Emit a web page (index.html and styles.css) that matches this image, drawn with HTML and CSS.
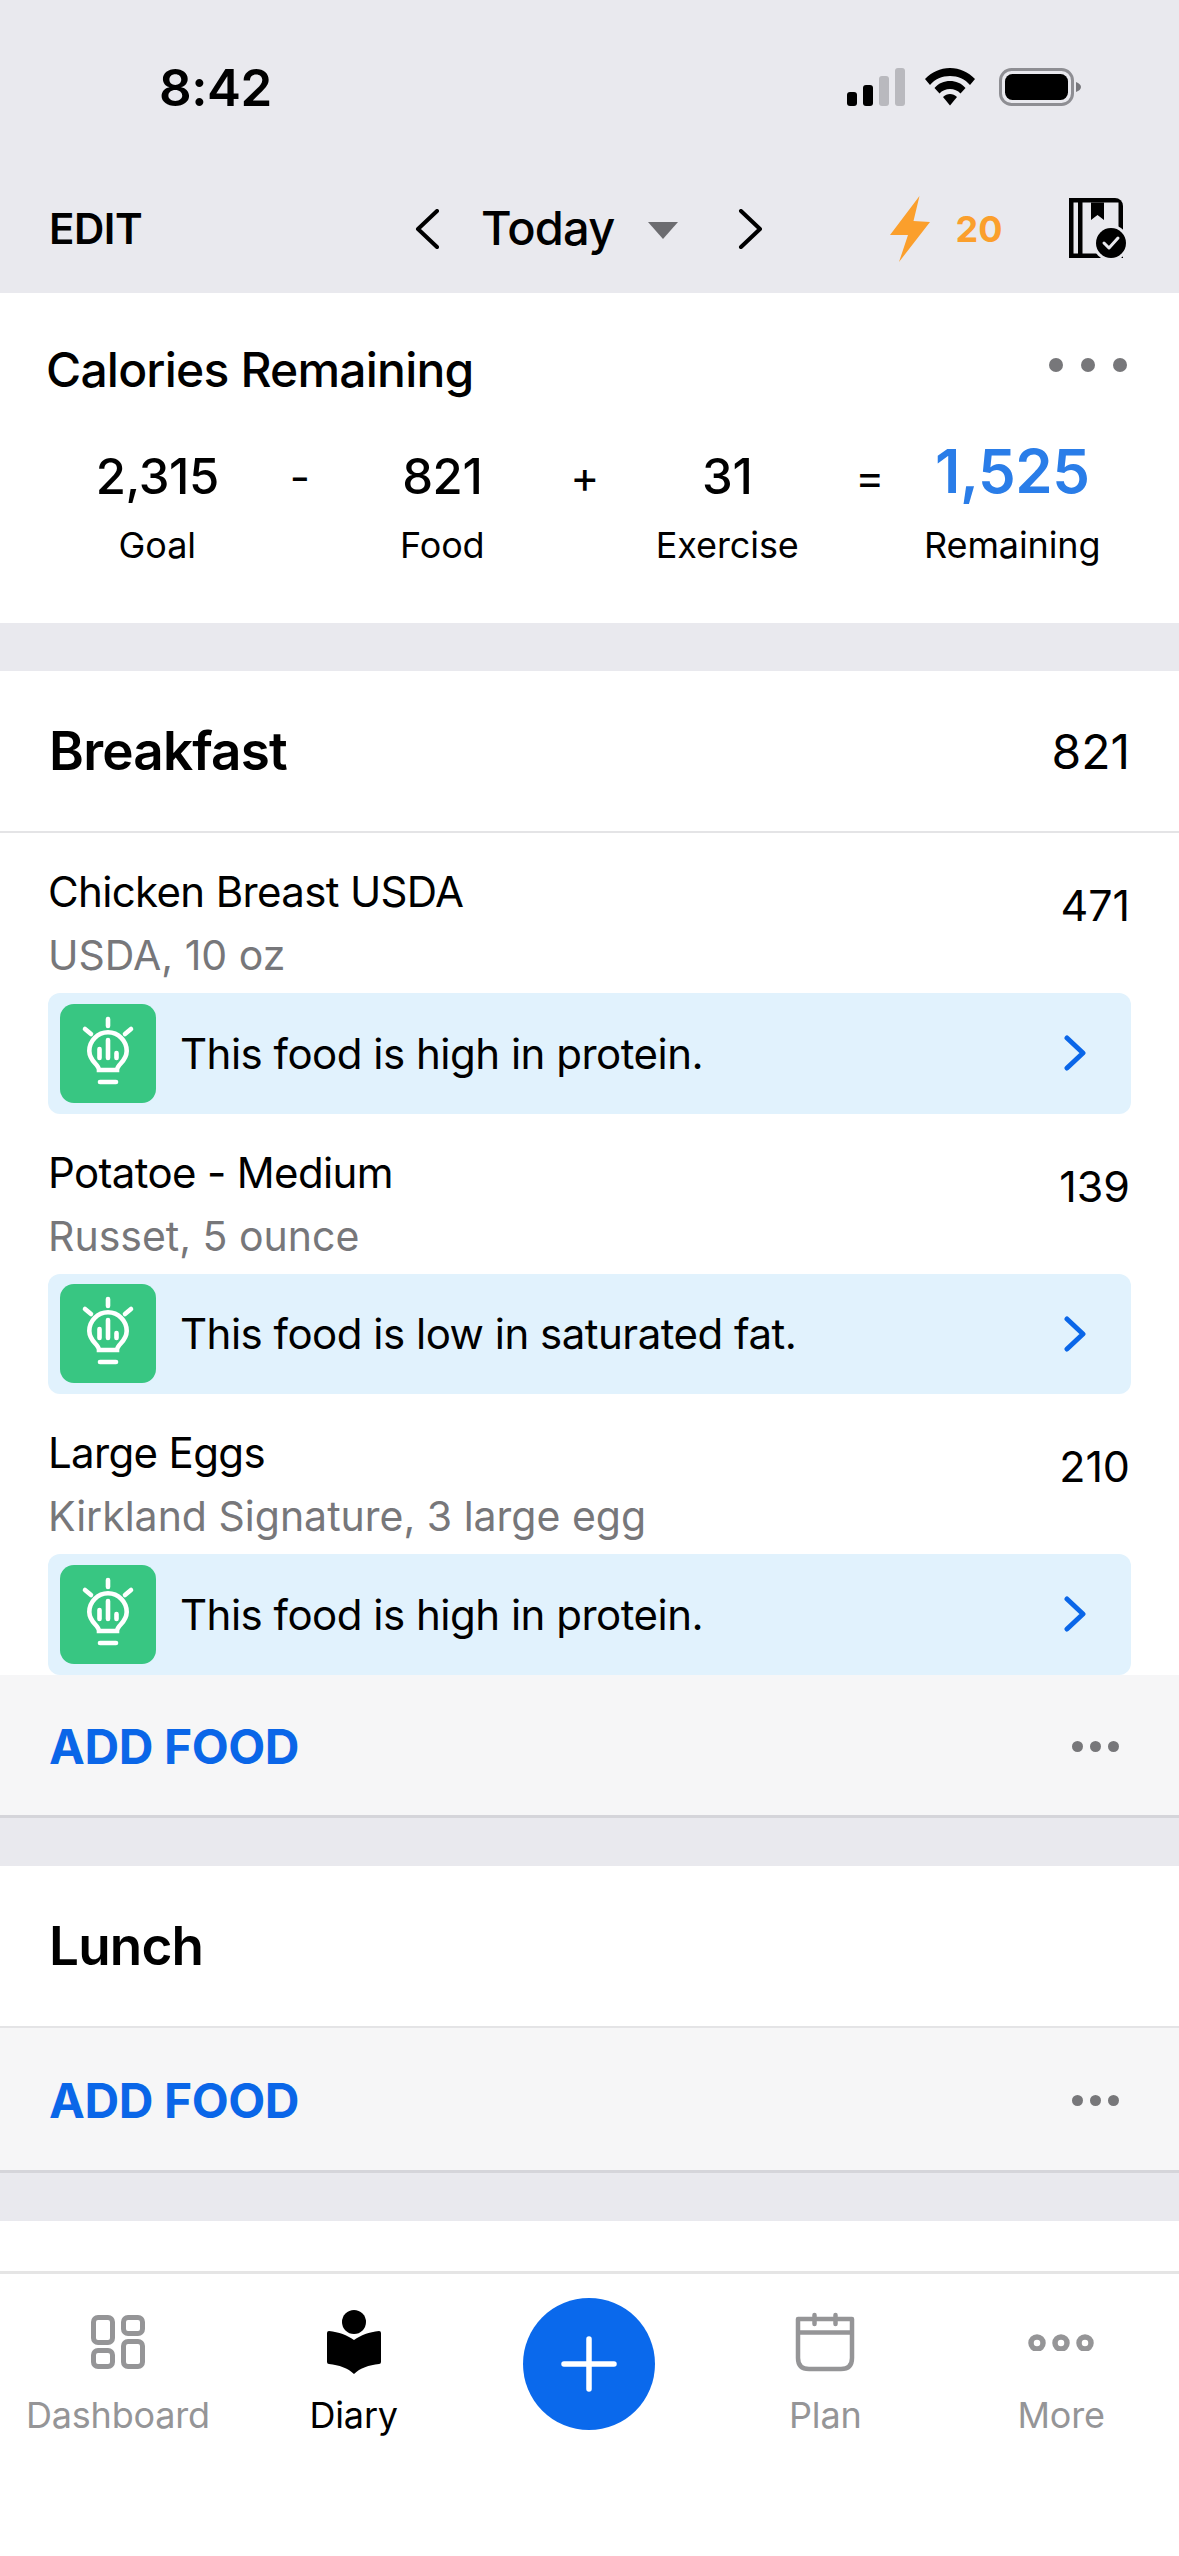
FILE: index.html
```html
<!DOCTYPE html>
<html lang="en">

<head>
  <meta charset="UTF-8">
  <meta name="viewport" content="width=device-width, initial-scale=1.0">
  <title>Diary</title>
  <link rel="stylesheet" href="styles.css">
</head>

<body>
  <svg class="defs" width="0" height="0">
    <symbol id="bulb" viewBox="0 0 96 99">
      <g fill="none" stroke="#fff" stroke-width="4.600" stroke-linecap="round">
        <path d="M39 66C39 60 29.500 58 29.300 47A18.700 18.700 0 1 1 66.700 47C66.500 58 57 60 57 66Z" />
        <path d="M48 15V22M25 25L31 30M71 25L65 30" />
        <path d="M39.500 45V54M48 36V54M56.500 49V54" />
        <path d="M40 78H56" />
      </g>
    </symbol>
    <symbol id="chev" viewBox="0 0 24 36">
      <path d="M4 3L20 18L4 33" fill="none" stroke="#0a66e8" stroke-width="5" stroke-linecap="round" stroke-linejoin="round" />
    </symbol>
  </svg>

  <!-- top bar -->
  <header class="top">
    <div class="status">
      <span class="clock">8:42</span>
      <svg class="signal" width="58" height="38" viewBox="0 0 58 38">
        <rect x="0" y="24" width="10" height="14" rx="3" fill="#000" />
        <rect x="16" y="17" width="10" height="21" rx="3" fill="#000" />
        <rect x="32" y="8" width="10" height="30" rx="3" fill="#b9b9be" />
        <rect x="48" y="0" width="10" height="38" rx="3" fill="#b9b9be" />
      </svg>
      <svg class="wifi" width="50" height="38" viewBox="0 0 50 38">
        <path d="M25 0C15 0 7 4 0 11L5 17C10 11 17 8 25 8C33 8 40 11 45 17L50 11C43 4 35 0 25 0Z" />
        <path d="M25 13C19 13 14 15 9.500 20L14.500 25.500C17 22.500 21 21 25 21C29 21 33 22.500 35.500 25.500L40.500 20C36 15 31 13 25 13Z" />
        <path d="M25 26C22.500 26 20 27 18 29L25 37.500L32 29C30 27 27.500 26 25 26Z" />
      </svg>
      <svg class="battery" width="83" height="38" viewBox="0 0 83 38">
        <rect x="1.500" y="1.500" width="72" height="35" rx="11" fill="none" stroke="#8e8e93" stroke-width="3" />
        <rect x="6" y="6" width="63" height="26" rx="7.500" fill="#000" />
        <path d="M77 14C80 15 82 17 82 19C82 21 80 23 77 24Z" fill="#77777c" />
      </svg>
    </div>
    <nav class="nav">
      <span class="edit">EDIT</span>
      <div class="date-pick">
        <svg width="25" height="40" viewBox="0 0 25 40">
          <path d="M22 2L3 20L22 38" fill="none" stroke="#000" stroke-width="4" stroke-linecap="round" stroke-linejoin="round" />
        </svg>
        <span class="today">Today</span>
        <span class="caret"></span>
        <svg width="25" height="40" viewBox="0 0 25 40">
          <path d="M3 2L22 20L3 38" fill="none" stroke="#000" stroke-width="4" stroke-linecap="round" stroke-linejoin="round" />
        </svg>
      </div>
      <div class="streak">
        <svg width="40" height="66" viewBox="0 0 40 66">
          <path d="M29.500 0L0 39L18 39L9 66L40 26L23.500 25Z" fill="#fb9f2c" />
        </svg>
        <span class="streak-num">20</span>
      </div>
      <svg class="plan-icon" width="60" height="62" viewBox="0 0 60 62">
        <path d="M0 0H46A8 8 0 0 1 54 8V60H0Z" fill="#000" />
        <rect x="4.500" y="4.500" width="4.500" height="51" fill="#e9e9ee" />
        <rect x="13.500" y="4.500" width="36" height="51" fill="#e9e9ee" />
        <path d="M22 4.500H35V22L28.500 17L22 22Z" fill="#000" />
        <circle cx="42" cy="45" r="18" fill="#e9e9ee" />
        <circle cx="42" cy="45" r="15" fill="#000" />
        <path d="M35 45L40 50L49 40" fill="none" stroke="#e9e9ee" stroke-width="3" stroke-linecap="round" stroke-linejoin="round" />
      </svg>
    </nav>
  </header>

  <main class="content">
    <!-- calories summary -->
    <section class="summary">
      <div class="summary-head">
        <h2>Calories Remaining</h2>
        <div class="summary-dots"><i></i><i></i><i></i></div>
      </div>
      <div class="equation">
        <div class="term"><b>2,315</b><span>Goal</span></div>
        <div class="op">-</div>
        <div class="term"><b>821</b><span>Food</span></div>
        <div class="op">+</div>
        <div class="term"><b>31</b><span>Exercise</span></div>
        <div class="op">=</div>
        <div class="term result"><b>1,525</b><span>Remaining</span></div>
      </div>
    </section>

    <!-- breakfast -->
    <section class="meal">
      <div class="meal-head">
        <h3>Breakfast</h3>
        <span class="meal-cal">821</span>
      </div>

      <div class="food">
        <div class="food-top">
          <div>
            <div class="food-name">Chicken Breast USDA</div>
            <div class="food-sub">USDA, 10 oz</div>
          </div>
          <div class="food-cal">471</div>
        </div>
        <div class="tip">
          <div class="tip-icon"><svg width="96" height="99"><use href="#bulb" /></svg></div>
          <span class="tip-text">This food is high in protein.</span>
          <svg class="tip-chev" width="24" height="36"><use href="#chev" /></svg>
        </div>
      </div>

      <div class="food">
        <div class="food-top">
          <div>
            <div class="food-name">Potatoe - Medium</div>
            <div class="food-sub">Russet, 5 ounce</div>
          </div>
          <div class="food-cal">139</div>
        </div>
        <div class="tip">
          <div class="tip-icon"><svg width="96" height="99"><use href="#bulb" /></svg></div>
          <span class="tip-text">This food is low in saturated fat.</span>
          <svg class="tip-chev" width="24" height="36"><use href="#chev" /></svg>
        </div>
      </div>

      <div class="food">
        <div class="food-top">
          <div>
            <div class="food-name">Large Eggs</div>
            <div class="food-sub">Kirkland Signature, 3 large egg</div>
          </div>
          <div class="food-cal">210</div>
        </div>
        <div class="tip">
          <div class="tip-icon"><svg width="96" height="99"><use href="#bulb" /></svg></div>
          <span class="tip-text">This food is high in protein.</span>
          <svg class="tip-chev" width="24" height="36"><use href="#chev" /></svg>
        </div>
      </div>

      <div class="add-row">
        <span class="add-food">ADD FOOD</span>
        <div class="add-dots"><i></i><i></i><i></i></div>
      </div>
    </section>

    <!-- lunch -->
    <section class="meal">
      <div class="meal-head">
        <h3>Lunch</h3>
      </div>
      <div class="add-row add-row-tall">
        <span class="add-food">ADD FOOD</span>
        <div class="add-dots"><i></i><i></i><i></i></div>
      </div>
    </section>

    <div class="next-meal"></div>
  </main>

  <!-- bottom tabs -->
  <footer class="tabs">
    <div class="tab">
      <div class="tab-icon">
        <svg width="54" height="54" viewBox="0 0 54 54" fill="none" stroke="#959597" stroke-width="5">
          <rect x="2.500" y="2.500" width="19" height="25" rx="4.500" />
          <rect x="32.500" y="2.500" width="19" height="16" rx="4.500" />
          <rect x="2.500" y="35.500" width="19" height="16" rx="4.500" />
          <rect x="32.500" y="26.500" width="19" height="25" rx="4.500" />
        </svg>
      </div>
      <span>Dashboard</span>
    </div>
    <div class="tab active">
      <div class="tab-icon">
        <svg width="54" height="64" viewBox="0 0 54 64">
          <circle cx="27" cy="12" r="12" />
          <path d="M2 21C12 22 20 25 27 30C34 25 42 22 52 21Q54 21 54 23V52Q54 54 52 54C42 55 33 58 27 64C21 58 12 55 2 54Q0 54 0 52V23Q0 21 2 21Z" />
        </svg>
      </div>
      <span>Diary</span>
    </div>
    <div class="tab add-tab">
      <div class="plus-btn">
        <svg width="56" height="56" viewBox="0 0 56 56">
          <path d="M28 3V53M3 28H53" stroke="#fff" stroke-width="5.500" stroke-linecap="round" />
        </svg>
      </div>
    </div>
    <div class="tab">
      <div class="tab-icon">
        <svg width="60" height="60" viewBox="0 0 60 60" fill="none" stroke="#959597" stroke-width="4.500">
          <path d="M3 7H57V46Q57 57 46 57H14Q3 57 3 46Z" stroke-linejoin="round" />
          <path d="M3 20.500H57" />
          <path d="M19.500 3V12M40.500 3V12" stroke-linecap="round" />
        </svg>
      </div>
      <span>Plan</span>
    </div>
    <div class="tab">
      <div class="tab-icon">
        <svg width="66" height="17" viewBox="0 0 66 17" fill="none" stroke="#959597" stroke-width="5.500">
          <circle cx="9" cy="9" r="6" />
          <circle cx="33" cy="9" r="6" />
          <circle cx="57" cy="9" r="6" />
        </svg>
      </div>
      <span>More</span>
    </div>
  </footer>
</body>

</html>
```

FILE: styles.css
```css
* {
  box-sizing: border-box;
  margin: 0;
  padding: 0;
}

body {
  display: flex;
  flex-direction: column;
  width: 1179px;
  height: 2556px;
  overflow: hidden;
  background-color: #e9e9ee;
  color: #000;
  font-family: Inter, "Liberation Sans", sans-serif;
}

.defs {
  display: block;
  height: 0;
}

/* top bar */
.top {
  height: 293px;
  flex: none;
}

.status {
  display: flex;
  align-items: center;
  height: 168px;
  padding: 6px 0 0 159px;
}

.clock {
  font-size: 51px;
  font-weight: 600;
  letter-spacing: -0.5px;
}

.signal {
  margin-left: 575px;
}

.wifi {
  margin-left: 20px;
}

.battery {
  margin-left: 24px;
}

.nav {
  display: flex;
  align-items: center;
  height: 125px;
  padding: 0 50px 4px 49px;
}

.edit {
  width: 100px;
  font-size: 42px;
  font-weight: 600;
  letter-spacing: -0.5px;
}

.date-pick {
  display: flex;
  align-items: center;
  margin-left: 266px;
}

.today {
  margin: -2px 0 0 41px;
  font-size: 47px;
  font-weight: 500;
  letter-spacing: -0.8px;
}

.caret {
  width: 0;
  height: 0;
  margin: 4px 60px 0 34px;
  border-left: 15px solid transparent;
  border-right: 15px solid transparent;
  border-top: 17px solid #6c6c70;
}

.streak {
  display: flex;
  align-items: center;
  margin-left: 127px;
}

.streak-num {
  margin-left: 25px;
  color: #fb9f2c;
  font-size: 36px;
  font-weight: 700;
}

.plan-icon {
  margin-left: auto;
}

.content {
  display: flex;
  flex-direction: column;
  flex: 1;
}

/* summary */
.summary {
  height: 330px;
  background-color: #fff;
}

.summary-head {
  display: flex;
  align-items: center;
  justify-content: space-between;
  height: 94px;
  padding: 58px 52px 0 46px;
}

.summary-head h2 {
  font-size: 48px;
  font-weight: 500;
  letter-spacing: -0.8px;
}

.summary-dots {
  display: flex;
  gap: 18px;
  margin-top: -8px;
}

.summary-dots i {
  width: 14px;
  height: 14px;
  border-radius: 50%;
  background-color: #77777a;
}

.equation {
  display: grid;
  grid-template-columns: repeat(7, 142.5px);
  padding: 60px 0 0 86px;
}

.term {
  display: flex;
  flex-direction: column;
  align-items: center;
  white-space: nowrap;
}

.term b {
  height: 60px;
  font-size: 49px;
  font-weight: 450;
  line-height: 60px;
  letter-spacing: -0.4px;
}

.term span {
  margin-top: 16px;
  font-size: 36px;
  line-height: 44px;
  letter-spacing: -0.1px;
}

.result b {
  color: #2a7de8;
  font-size: 60px;
  font-weight: 600;
  line-height: 48px;
  letter-spacing: -0.5px;
}

.op {
  height: 60px;
  font-size: 44px;
  line-height: 60px;
  text-align: center;
}

/* meals */
.meal {
  margin-top: 48px;
  background-color: #fff;
}

.meal-head {
  display: flex;
  align-items: center;
  justify-content: space-between;
  height: 162px;
  padding: 0 49px 0 49px;
  border-bottom: 2px solid #e4e4e6;
}

.meal-head h3 {
  font-size: 53px;
  font-weight: 600;
  letter-spacing: -0.8px;
}

.meal-cal {
  font-size: 48px;
}

.food {
  height: 280.500px;
  padding-top: 34px;
}

.food-top {
  display: flex;
  justify-content: space-between;
  padding: 0 49px 0 48px;
}

.food-name {
  font-size: 42px;
  line-height: 50px;
  letter-spacing: -0.650px;
}

.food-sub {
  margin-top: 13px;
  color: #77777a;
  font-size: 41px;
  line-height: 50px;
}

.food-cal {
  margin-top: 13px;
  font-size: 43px;
  line-height: 50px;
}

.tip {
  display: flex;
  align-items: center;
  height: 120.500px;
  margin: 13px 48px 0;
  padding: 0 44px 0 12px;
  border-radius: 12px;
  background-color: #e1f2fd;
}

.tip-icon {
  width: 96px;
  height: 99px;
  border-radius: 14px;
  background-color: #38c682;
}

.tip-text {
  margin-left: 24px;
  font-size: 42px;
  letter-spacing: -0.500px;
}

.tip-chev {
  margin-left: auto;
}

.add-row {
  display: flex;
  align-items: center;
  justify-content: space-between;
  height: 143px;
  padding: 3px 60px 0 49px;
  border-bottom: 3px solid #d5d5da;
  background-color: #f6f6f7;
}

.add-row-tall {
  height: 145px;
}

.add-food {
  color: #0a66e8;
  font-size: 48px;
  font-weight: 700;
  letter-spacing: -0.4px;
}

.add-dots {
  display: flex;
  gap: 7px;
}

.add-dots i {
  width: 11px;
  height: 11px;
  border-radius: 50%;
  background-color: #77777a;
}

.next-meal {
  flex: 1;
  margin-top: 48px;
  background-color: #fff;
}

/* bottom tabs */
.tabs {
  display: grid;
  grid-template-columns: repeat(5, 1fr);
  flex: none;
  height: 285px;
  padding-top: 34px;
  border-top: 3px solid #e5e5e5;
  background-color: #fff;
}

.tab {
  display: flex;
  flex-direction: column;
  align-items: center;
  color: #959597;
  font-size: 36px;
  line-height: 44px;
  letter-spacing: -0.2px;
}

.tab.active {
  color: #000;
}

.tab-icon {
  display: flex;
  align-items: center;
  justify-content: center;
  height: 68px;
  margin-bottom: 17px;
}

.add-tab {
  margin-top: -10px;
}

.plus-btn {
  display: flex;
  align-items: center;
  justify-content: center;
  width: 132px;
  height: 132px;
  border-radius: 50%;
  background-color: #0a69ec;
}
```
